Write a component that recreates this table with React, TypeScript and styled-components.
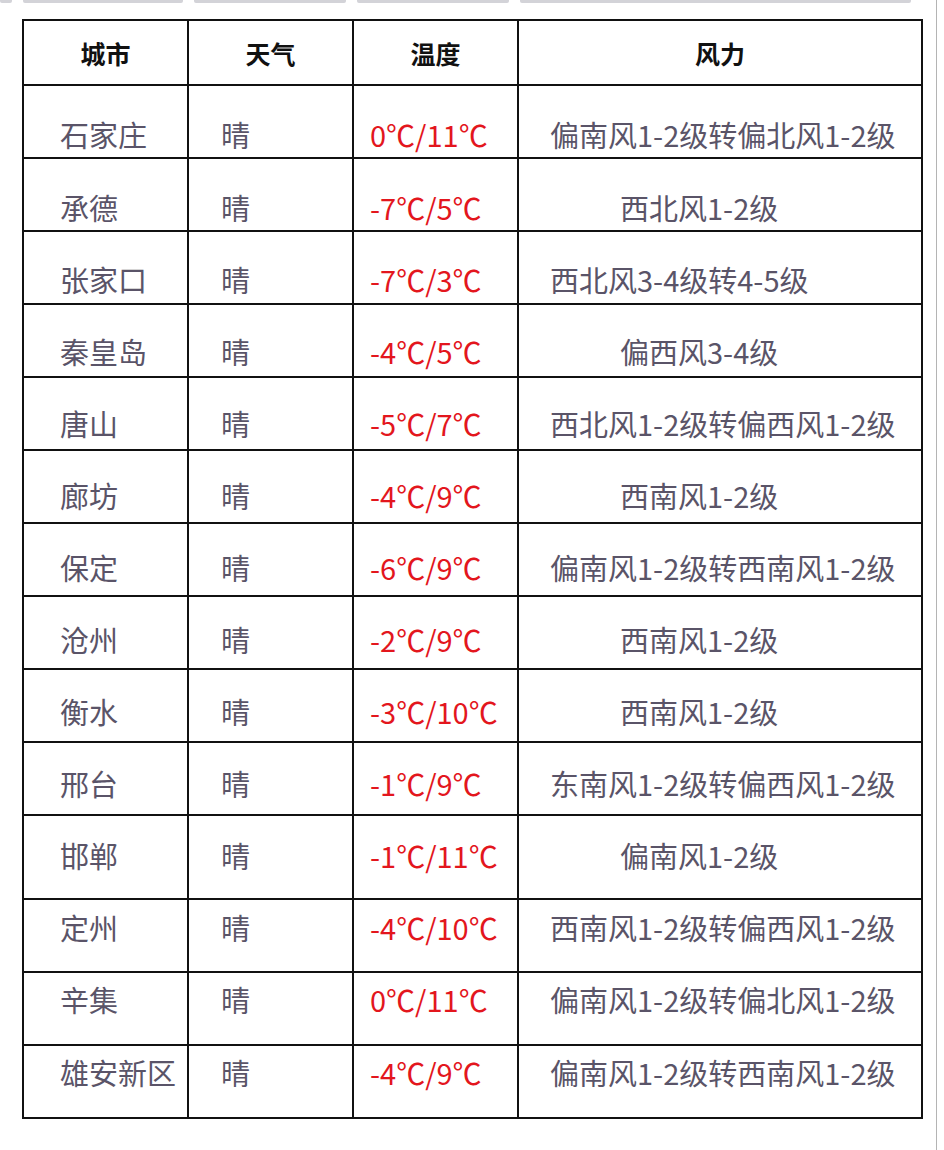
import styled, { createGlobalStyle } from 'styled-components';

const GlobalStyle = createGlobalStyle`
    html, body {
        margin: 0;
        padding: 0;
        background: #ffffff;
    }
    body {
        font-family: 'Noto Sans CJK SC', 'Noto Sans', sans-serif;
    }
`;

type Row = {
    city: string;
    temp: string;
    wind: string;
    short?: boolean;
    height?: number;
    pad: number;
};

const rows: Row[] = [
    { city: '石家庄', temp: '0℃/11℃', wind: '偏南风1-2级转偏北风1-2级', pad: 31 },
    { city: '承德', temp: '-7℃/5℃', wind: '西北风1-2级', short: true, pad: 31 },
    { city: '张家口', temp: '-7℃/3℃', wind: '西北风3-4级转4-5级', pad: 30 },
    { city: '秦皇岛', temp: '-4℃/5℃', wind: '偏西风3-4级', short: true, pad: 29 },
    { city: '唐山', temp: '-5℃/7℃', wind: '西北风1-2级转偏西风1-2级', pad: 28 },
    { city: '廊坊', temp: '-4℃/9℃', wind: '西南风1-2级', short: true, pad: 27 },
    { city: '保定', temp: '-6℃/9℃', wind: '偏南风1-2级转西南风1-2级', pad: 26 },
    { city: '沧州', temp: '-2℃/9℃', wind: '西南风1-2级', short: true, pad: 25 },
    { city: '衡水', temp: '-3℃/10℃', wind: '西南风1-2级', short: true, pad: 24 },
    { city: '邢台', temp: '-1℃/9℃', wind: '东南风1-2级转偏西风1-2级', pad: 23 },
    { city: '邯郸', temp: '-1℃/11℃', wind: '偏南风1-2级', short: true, height: 84, pad: 22 },
    { city: '定州', temp: '-4℃/10℃', wind: '西南风1-2级转偏西风1-2级', pad: 10 },
    { city: '辛集', temp: '0℃/11℃', wind: '偏南风1-2级转偏北风1-2级', pad: 9 },
    { city: '雄安新区', temp: '-4℃/9℃', wind: '偏南风1-2级转西南风1-2级', pad: 9 },
];

const App = () => {
    return (
        <Page>
            <GlobalStyle />
            <TopStrip>
                <StripBar $w={12} />
                <StripBar $w={160} />
                <StripBar $w={152} />
                <StripBar $w={152} />
                <StripBar $w={391} />
            </TopStrip>
            <Table>
                <HeadCell>城市</HeadCell>
                <HeadCell>天气</HeadCell>
                <HeadCell>温度</HeadCell>
                <HeadCell>风力</HeadCell>
                {rows.map((row) => (
                    <DataRow key={row.city} row={row} />
                ))}
            </Table>
        </Page>
    );
};

const DataRow = ({ row }: { row: Row }) => {
    const h = row.height ?? 73;
    return (
        <>
            <Cell $h={h} $pad={row.pad} $left={36}>
                {row.city}
            </Cell>
            <Cell $h={h} $pad={row.pad} $left={32}>
                晴
            </Cell>
            <Cell $h={h} $pad={row.pad} $left={16} $red>
                {row.temp}
            </Cell>
            <Cell $h={h} $pad={row.pad} $left={row.short ? 101 : 31}>
                {row.wind}
            </Cell>
        </>
    );
};

const Page = styled.div`
    width: 937px;
    min-height: 1150px;
    border-right: 1px solid #b4b4b4;
    box-sizing: border-box;
`;

const TopStrip = styled.div`
    display: flex;
    gap: 11px;
    height: 3px;
`;

const StripBar = styled.div<{ $w: number }>`
    width: ${({ $w }) => $w}px;
    height: 3px;
    background: #d3d3d8;
    border-radius: 0 0 2px 2px;
`;

const Table = styled.div`
    margin: 16px 0 0 22px;
    width: 901px;
    display: grid;
    grid-template-columns: 165px 165px 165px 1fr;
    border-top: 2px solid #111;
    border-left: 2px solid #111;
    box-sizing: border-box;
`;

const HeadCell = styled.div`
    height: 65px;
    display: flex;
    align-items: center;
    justify-content: center;
    border-right: 2px solid #111;
    border-bottom: 2px solid #111;
    box-sizing: border-box;
    font-size: 25px;
    font-weight: 700;
    color: #111;
`;

const Cell = styled.div<{ $h: number; $pad: number; $left: number; $red?: boolean }>`
    height: ${({ $h }) => $h}px;
    padding: ${({ $pad }) => $pad}px 0 0 ${({ $left }) => $left}px;
    border-right: 2px solid #111;
    border-bottom: 2px solid #111;
    box-sizing: border-box;
    font-size: 29px;
    line-height: 34px;
    white-space: nowrap;
    color: ${({ $red }) => ($red ? '#e3161d' : '#5a5468')};
`;

export default App;
